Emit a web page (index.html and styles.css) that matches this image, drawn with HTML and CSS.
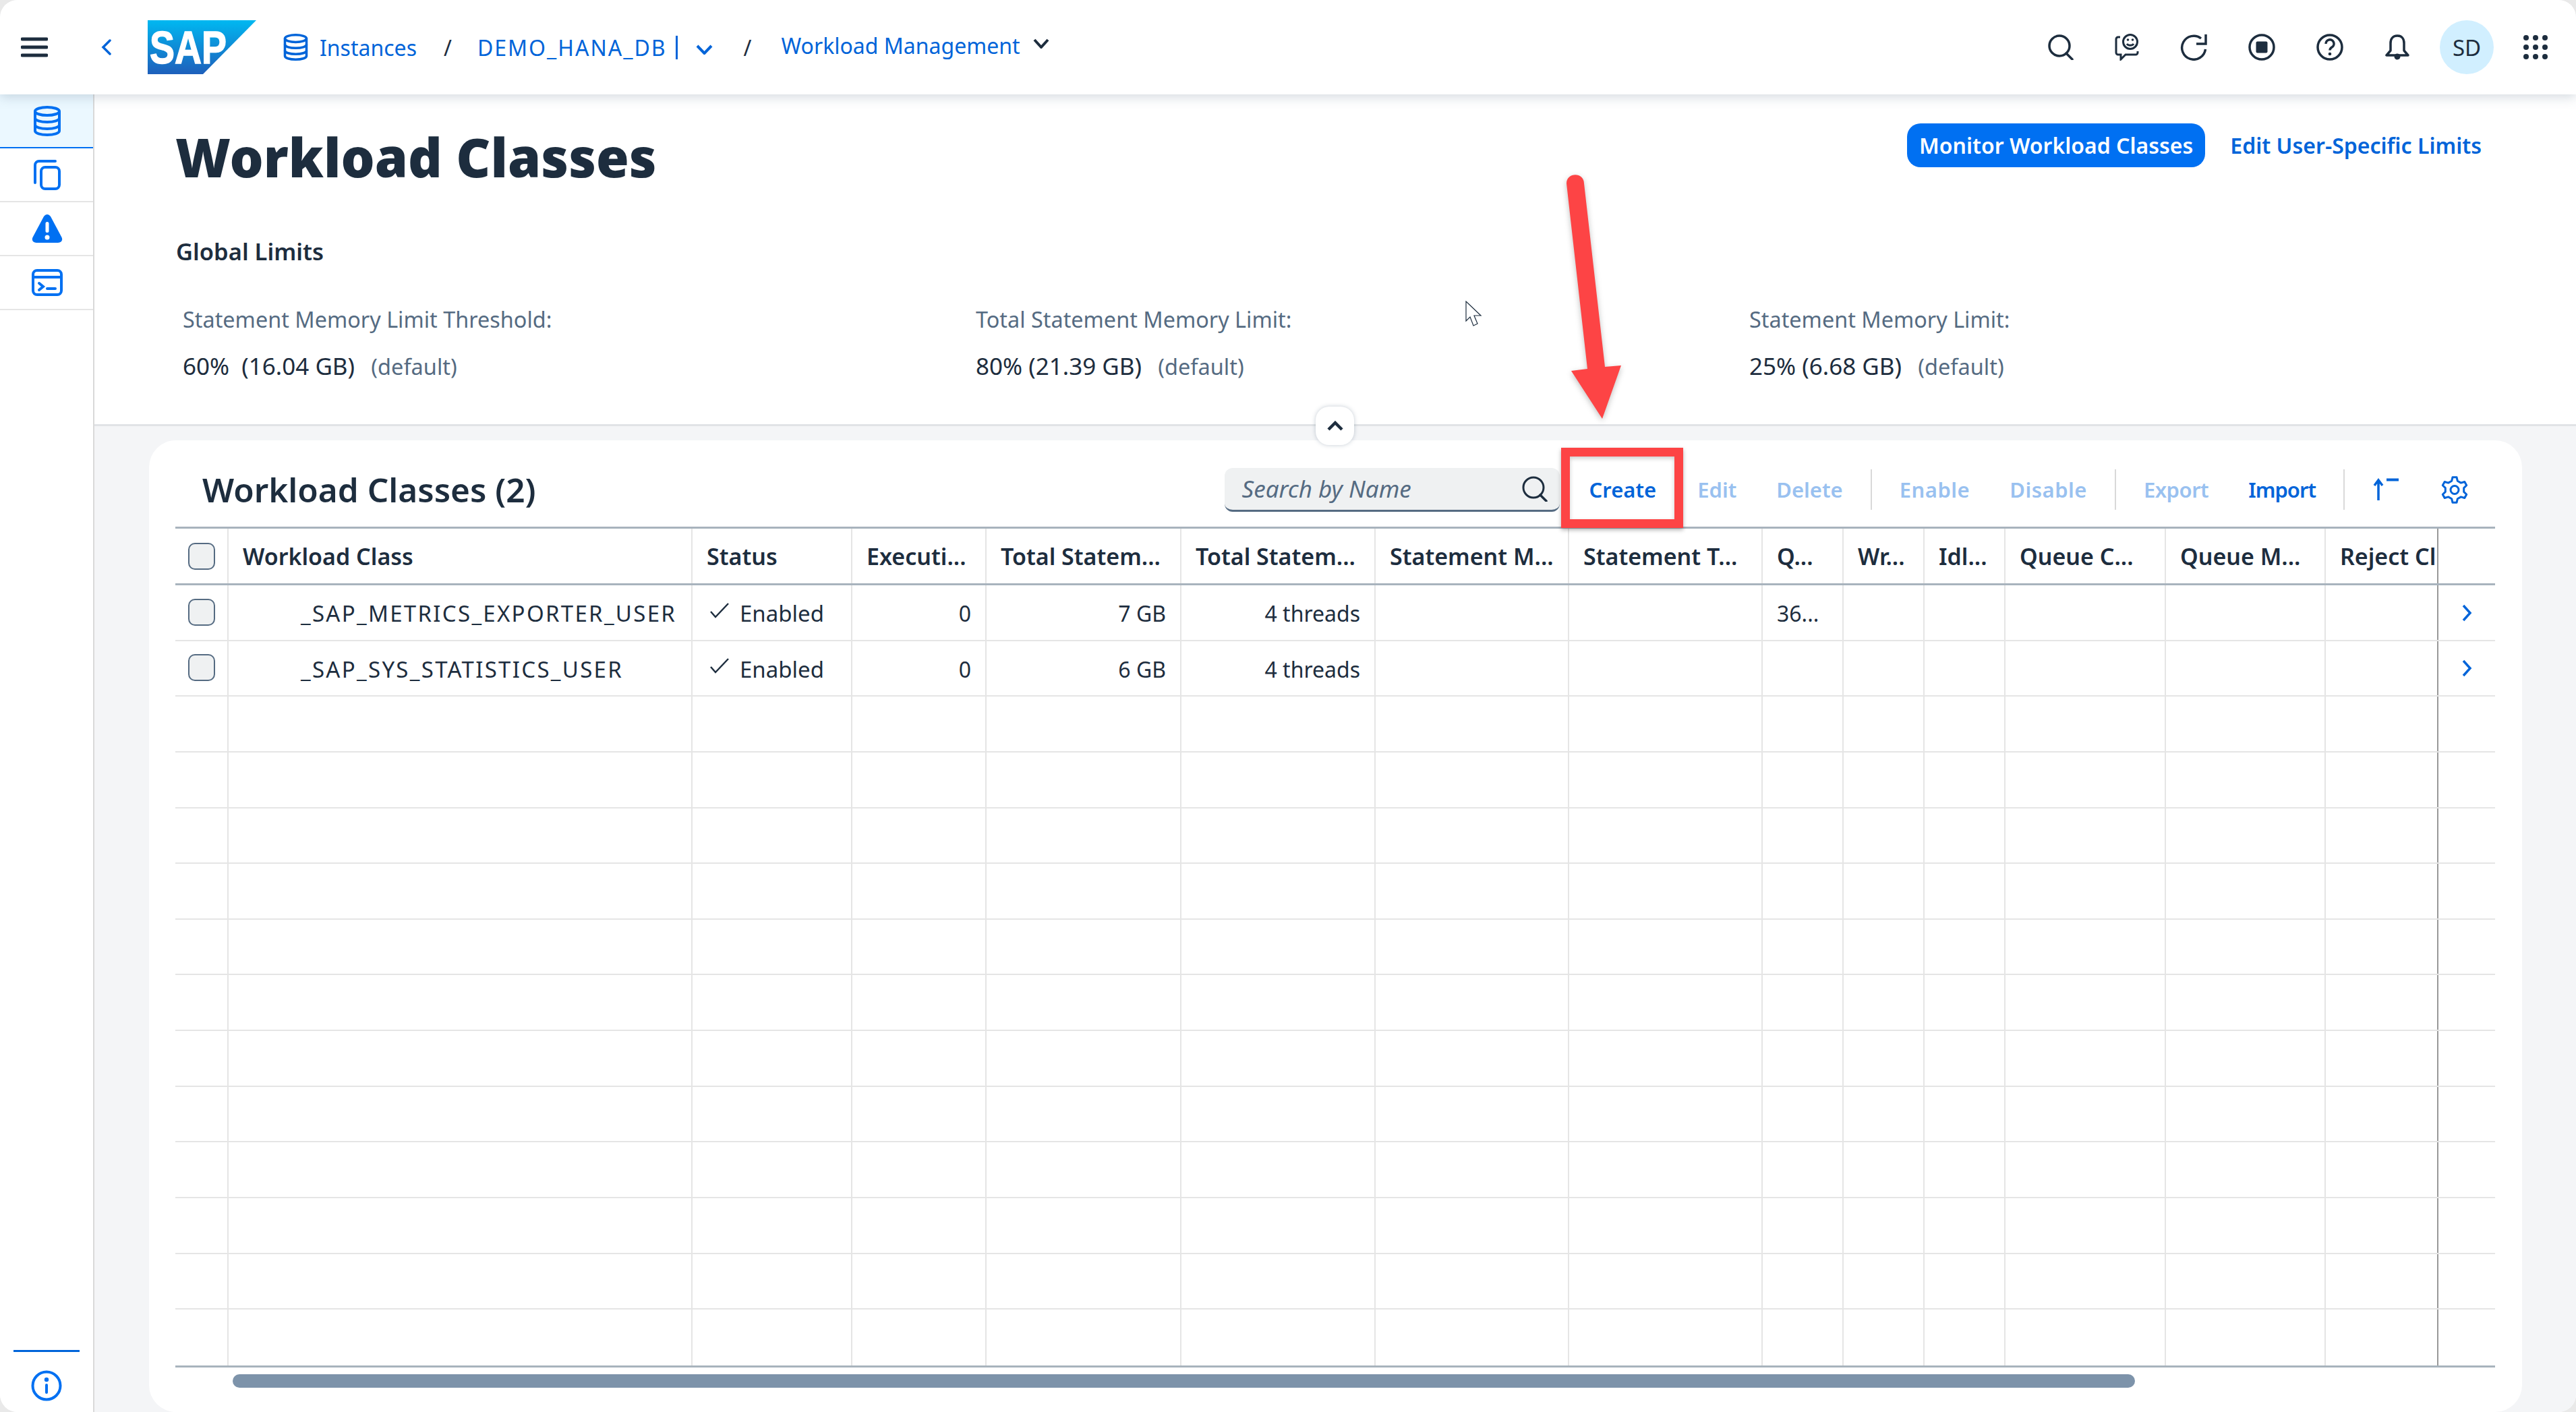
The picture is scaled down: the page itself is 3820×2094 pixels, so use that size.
FILE: index.html
```html
<!DOCTYPE html>
<html lang="en">
<head>
    <meta charset="UTF-8">
    <title>Workload Classes</title>
    <link rel="stylesheet" href="styles.css">
</head>
<body>
    <svg class="defs" width="0" height="0">
        <symbol id="db" viewBox="0 0 40 45">
            <g fill="none" stroke="currentColor" stroke-width="4">
                <ellipse cx="20" cy="8" rx="18" ry="6"/>
                <path d="M2 8v29c0 3.5 8 6 18 6s18-2.500 18-6V8"/>
                <path d="M2 18c0 3.500 8 6 18 6s18-2.500 18-6"/>
                <path d="M2 28c0 3.500 8 6 18 6s18-2.500 18-6"/>
            </g>
        </symbol>
    </svg>

    <div class="app">
        <header class="header">
            <svg class="menu-icon" width="40" height="30" viewBox="0 0 40 30"><path d="M2 3h36M2 15h36M2 27h36" stroke="#1d2d3e" stroke-width="5" stroke-linecap="round"/></svg>
            <svg class="back-icon" width="18" height="24" viewBox="0 0 18 24"><path d="M14 2L4 12l10 10" fill="none" stroke="#0064d9" stroke-width="3.500" stroke-linecap="round"/></svg>
            <svg class="logo" width="161" height="80" viewBox="0 0 161 80">
                <defs>
                    <linearGradient id="sapblue" x1="0" y1="0" x2="0" y2="1">
                        <stop offset="0" stop-color="#00b8f1"/>
                        <stop offset="1" stop-color="#1e5fbb"/>
                    </linearGradient>
                </defs>
                <path d="M0 0H161L82 80H0z" fill="url(#sapblue)"/>
                <text x="3" y="64" class="logo-text" textLength="114" lengthAdjust="spacingAndGlyphs">SAP</text>
            </svg>
            <nav class="crumbs">
                <svg class="crumb-db" width="37" height="40"><use href="#db"/></svg>
                <a class="crumb-link">Instances</a>
                <span class="crumb-sep">/</span>
                <a class="crumb-link crumb-db-name">DEMO_HANA_DB</a>
                <span class="crumb-bar"></span>
                <svg class="crumb-down" width="25" height="15" viewBox="0 0 25 15"><path d="M2 2l10.500 11L23 2" fill="none" stroke="#0064d9" stroke-width="4"/></svg>
                <span class="crumb-sep crumb-sep-2">/</span>
                <a class="crumb-link crumb-raised">Workload Management</a>
                <svg class="crumb-down-dark" width="24" height="15" viewBox="0 0 24 15"><path d="M2 2l10 11L22 2" fill="none" stroke="#1d2d3e" stroke-width="4"/></svg>
            </nav>
            <div class="shell-actions">
                <svg class="shell-icon" width="38" height="38" viewBox="0 0 38 38"><circle cx="17" cy="17" r="15" fill="none" stroke="#1d2d3e" stroke-width="3.500"/><path d="M27 28l9 9" stroke="#1d2d3e" stroke-width="3.500" stroke-linecap="round"/></svg>
                <svg class="shell-icon" width="36" height="40" viewBox="0 0 36 40"><g fill="none" stroke="#1d2d3e" stroke-width="3"><circle cx="23" cy="12" r="10.500"/><path d="M8 5H5a3 3 0 0 0-3 3v20a3 3 0 0 0 3 3h4v7l7-7h15a3 3 0 0 0 3-3v-2"/><path d="M18 15c2 3 8 3 10 0"/></g><circle cx="19.500" cy="9" r="1.800" fill="#1d2d3e"/><circle cx="26.500" cy="9" r="1.800" fill="#1d2d3e"/></svg>
                <svg class="shell-icon" width="40" height="40" viewBox="0 0 40 40"><g fill="none" stroke="#1d2d3e" stroke-width="3.500"><path d="M31 7A17.500 17.500 0 1 0 37.500 23"/><path d="M38 1V15H24"/></g></svg>
                <svg class="shell-icon" width="40" height="40" viewBox="0 0 40 40"><circle cx="20" cy="20" r="18" fill="none" stroke="#1d2d3e" stroke-width="3.500"/><rect x="11.500" y="11.500" width="17" height="17" rx="2" fill="#1d2d3e"/></svg>
                <svg class="shell-icon" width="40" height="40" viewBox="0 0 40 40"><circle cx="20" cy="20" r="18" fill="none" stroke="#1d2d3e" stroke-width="3.500"/><path d="M14 15a6 6 0 1 1 9 5c-2 1.300-3 2.500-3 4.500" fill="none" stroke="#1d2d3e" stroke-width="3.500"/><circle cx="20" cy="30" r="2.300" fill="#1d2d3e"/></svg>
                <svg class="shell-icon" width="38" height="38" viewBox="0 0 38 38"><path d="M19 2c-7 0-10 5-10 11v11l-6 7h32l-6-7V13c0-6-3-11-10-11z" fill="none" stroke="#1d2d3e" stroke-width="3.500" stroke-linejoin="round"/><circle cx="19" cy="33" r="4.500" fill="#1d2d3e"/></svg>
                <div class="avatar">SD</div>
                <svg class="shell-icon grid-icon" width="36" height="36" viewBox="0 0 36 36" fill="#1d2d3e"><circle cx="4" cy="4" r="4"/><circle cx="18" cy="4" r="4"/><circle cx="32" cy="4" r="4"/><circle cx="4" cy="18" r="4"/><circle cx="18" cy="18" r="4"/><circle cx="32" cy="18" r="4"/><circle cx="4" cy="32" r="4"/><circle cx="18" cy="32" r="4"/><circle cx="32" cy="32" r="4"/></svg>
            </div>
        </header>

        <div class="main">
            <aside class="sidebar">
                <div class="side-item side-active"><svg width="40" height="45"><use href="#db"/></svg></div>
                <div class="side-item">
                    <svg width="40" height="45" viewBox="0 0 40 45" fill="none" stroke="currentColor" stroke-width="4"><rect x="11" y="11" width="27" height="32" rx="6"/><path d="M2 34V8a6 6 0 0 1 6-6h24" stroke-linecap="round"/></svg>
                </div>
                <div class="side-item">
                    <svg width="46" height="42" viewBox="0 0 46 42"><path d="M18 3L2 33c-3 5 0 9 5 9h32c5 0 8-4 5-9L28 3c-3-4-7-4-10 0z" fill="currentColor"/><rect x="20.500" y="11" width="5" height="16" rx="2.500" fill="#fff"/><circle cx="23" cy="34" r="3.500" fill="#fff"/></svg>
                </div>
                <div class="side-item">
                    <svg width="46" height="40" viewBox="0 0 46 40" fill="none" stroke="currentColor" stroke-width="4"><rect x="2" y="2" width="42" height="36" rx="6"/><path d="M2 12h42"/><path d="M11 21l6 5-6 5" stroke-linecap="round"/><path d="M23 29h12" stroke-linecap="round"/></svg>
                </div>
                <div class="side-foot">
                    <div class="side-rule"></div>
                    <svg class="info-icon" width="46" height="46" viewBox="0 0 46 46"><circle cx="23" cy="23" r="20.500" fill="none" stroke="currentColor" stroke-width="4"/><circle cx="23" cy="14" r="3.200" fill="currentColor"/><path d="M23 22v11" stroke="currentColor" stroke-width="4" stroke-linecap="round"/></svg>
                </div>
            </aside>

            <main class="content">
                <section class="limits">
                    <div class="limits-top">
                        <h1 class="page-title">Workload Classes</h1>
                        <div class="limits-actions">
                            <button class="btn-primary">Monitor Workload Classes</button>
                            <a class="top-link">Edit User-Specific Limits</a>
                        </div>
                    </div>
                    <h2 class="limits-title">Global Limits</h2>
                    <div class="limits-grid">
                        <div class="limit limit-1">
                            <p class="limit-label">Statement Memory Limit Threshold:</p>
                            <p class="limit-value">60%&nbsp; (16.04 GB)&nbsp; <span class="muted">(default)</span></p>
                        </div>
                        <div class="limit limit-2">
                            <p class="limit-label">Total Statement Memory Limit:</p>
                            <p class="limit-value">80% (21.39 GB)&nbsp; <span class="muted">(default)</span></p>
                        </div>
                        <div class="limit">
                            <p class="limit-label">Statement Memory Limit:</p>
                            <p class="limit-value">25% (6.68 GB)&nbsp; <span class="muted">(default)</span></p>
                        </div>
                    </div>
                    <button class="collapse-btn">
                        <svg width="24" height="16" viewBox="0 0 24 16"><path d="M2 13L12 3l10 10" fill="none" stroke="#1d2d3e" stroke-width="4.500"/></svg>
                    </button>
                </section>

                <div class="card-wrap">
                    <section class="card">
                        <div class="card-head">
                            <h2 class="card-title">Workload Classes (2)</h2>
                            <div class="toolbar">
                                <div class="search">
                                    <span class="search-text">Search by Name</span>
                                    <svg width="38" height="38" viewBox="0 0 38 38"><circle cx="17" cy="17" r="15" fill="none" stroke="#1d2d3e" stroke-width="3"/><path d="M27 28l9 9" stroke="#1d2d3e" stroke-width="3.500" stroke-linecap="round"/></svg>
                                </div>
                                <a class="tool tool-create">Create</a>
                                <a class="tool tool-off">Edit</a>
                                <a class="tool tool-off tool-end">Delete</a>
                                <span class="tool-sep"></span>
                                <a class="tool tool-off tool-wide">Enable</a>
                                <a class="tool tool-off tool-wide tool-end">Disable</a>
                                <span class="tool-sep"></span>
                                <a class="tool tool-off tool-tight">Export</a>
                                <a class="tool tool-import tool-end">Import</a>
                                <span class="tool-sep"></span>
                                <svg class="tool-sort" width="40" height="34" viewBox="0 0 40 34"><path d="M9 33V3M3 11l6-8 6 8" fill="none" stroke="#0064d9" stroke-width="3.500"/><path d="M21 2.500h18" stroke="#0064d9" stroke-width="4"/></svg>
                                <svg class="tool-gear" width="40" height="41" viewBox="0 0 40 41"><path d="M17 1.700H23L24.300 7.200L29.400 10.100L34.800 8.500L37.700 13.700L33.700 17.600V23.400L37.700 27.300L34.800 32.500L29.400 30.900L24.300 33.800L23 39.300H17L15.700 33.800L10.600 30.900L5.200 32.500L2.300 27.300L6.300 23.400V17.600L2.300 13.700L5.200 8.500L10.600 10.100L15.700 7.200z" fill="none" stroke="#0064d9" stroke-width="3" stroke-linejoin="round"/><circle cx="20" cy="20.500" r="6" fill="none" stroke="#0064d9" stroke-width="3"/></svg>
                            </div>
                        </div>

                        <div class="table">
                            <div class="row row-head">
                                <div class="cell"><span class="check"></span></div>
                                <div class="cell">Workload Class</div>
                                <div class="cell">Status</div>
                                <div class="cell">Executi...</div>
                                <div class="cell">Total Statem...</div>
                                <div class="cell">Total Statem...</div>
                                <div class="cell">Statement M...</div>
                                <div class="cell">Statement T...</div>
                                <div class="cell">Q...</div>
                                <div class="cell">Wr...</div>
                                <div class="cell">Idl...</div>
                                <div class="cell">Queue C...</div>
                                <div class="cell">Queue M...</div>
                                <div class="cell cell-fixed">Reject Cl</div>
                                <div class="cell"></div>
                            </div>
                            <div class="row">
                                <div class="cell"><span class="check check-row"></span></div>
                                <div class="cell cell-name">_SAP_METRICS_EXPORTER_USER</div>
                                <div class="cell cell-status"><svg width="30" height="24" viewBox="0 0 30 24"><path d="M2 14l7 8L28 2" fill="none" stroke="#1d2d3e" stroke-width="2.500"/></svg>Enabled</div>
                                <div class="cell cell-num">0</div>
                                <div class="cell cell-num">7 GB</div>
                                <div class="cell cell-num">4 threads</div>
                                <div class="cell"></div>
                                <div class="cell"></div>
                                <div class="cell cell-low">36...</div>
                                <div class="cell"></div>
                                <div class="cell"></div>
                                <div class="cell"></div>
                                <div class="cell"></div>
                                <div class="cell cell-fixed"></div>
                                <div class="cell cell-go"><svg width="16" height="26" viewBox="0 0 16 26"><path d="M3 2l10 11L3 24" fill="none" stroke="#0064d9" stroke-width="3.500"/></svg></div>
                            </div>
                            <div class="row">
                                <div class="cell"><span class="check check-row"></span></div>
                                <div class="cell cell-name">_SAP_SYS_STATISTICS_USER</div>
                                <div class="cell cell-status"><svg width="30" height="24" viewBox="0 0 30 24"><path d="M2 14l7 8L28 2" fill="none" stroke="#1d2d3e" stroke-width="2.500"/></svg>Enabled</div>
                                <div class="cell cell-num">0</div>
                                <div class="cell cell-num">6 GB</div>
                                <div class="cell cell-num">4 threads</div>
                                <div class="cell"></div>
                                <div class="cell"></div>
                                <div class="cell"></div>
                                <div class="cell"></div>
                                <div class="cell"></div>
                                <div class="cell"></div>
                                <div class="cell"></div>
                                <div class="cell cell-fixed"></div>
                                <div class="cell cell-go"><svg width="16" height="26" viewBox="0 0 16 26"><path d="M3 2l10 11L3 24" fill="none" stroke="#0064d9" stroke-width="3.500"/></svg></div>
                            </div>
                            <!-- 3 -->
                            <div class="row"><div class="cell"></div><div class="cell"></div><div class="cell"></div><div class="cell"></div><div class="cell"></div><div class="cell"></div><div class="cell"></div><div class="cell"></div><div class="cell"></div><div class="cell"></div><div class="cell"></div><div class="cell"></div><div class="cell"></div><div class="cell cell-fixed"></div><div class="cell"></div></div>
                            <!-- 4 -->
                            <div class="row"><div class="cell"></div><div class="cell"></div><div class="cell"></div><div class="cell"></div><div class="cell"></div><div class="cell"></div><div class="cell"></div><div class="cell"></div><div class="cell"></div><div class="cell"></div><div class="cell"></div><div class="cell"></div><div class="cell"></div><div class="cell cell-fixed"></div><div class="cell"></div></div>
                            <!-- 5 -->
                            <div class="row"><div class="cell"></div><div class="cell"></div><div class="cell"></div><div class="cell"></div><div class="cell"></div><div class="cell"></div><div class="cell"></div><div class="cell"></div><div class="cell"></div><div class="cell"></div><div class="cell"></div><div class="cell"></div><div class="cell"></div><div class="cell cell-fixed"></div><div class="cell"></div></div>
                            <!-- 6 -->
                            <div class="row"><div class="cell"></div><div class="cell"></div><div class="cell"></div><div class="cell"></div><div class="cell"></div><div class="cell"></div><div class="cell"></div><div class="cell"></div><div class="cell"></div><div class="cell"></div><div class="cell"></div><div class="cell"></div><div class="cell"></div><div class="cell cell-fixed"></div><div class="cell"></div></div>
                            <!-- 7 -->
                            <div class="row"><div class="cell"></div><div class="cell"></div><div class="cell"></div><div class="cell"></div><div class="cell"></div><div class="cell"></div><div class="cell"></div><div class="cell"></div><div class="cell"></div><div class="cell"></div><div class="cell"></div><div class="cell"></div><div class="cell"></div><div class="cell cell-fixed"></div><div class="cell"></div></div>
                            <!-- 8 -->
                            <div class="row"><div class="cell"></div><div class="cell"></div><div class="cell"></div><div class="cell"></div><div class="cell"></div><div class="cell"></div><div class="cell"></div><div class="cell"></div><div class="cell"></div><div class="cell"></div><div class="cell"></div><div class="cell"></div><div class="cell"></div><div class="cell cell-fixed"></div><div class="cell"></div></div>
                            <!-- 9 -->
                            <div class="row"><div class="cell"></div><div class="cell"></div><div class="cell"></div><div class="cell"></div><div class="cell"></div><div class="cell"></div><div class="cell"></div><div class="cell"></div><div class="cell"></div><div class="cell"></div><div class="cell"></div><div class="cell"></div><div class="cell"></div><div class="cell cell-fixed"></div><div class="cell"></div></div>
                            <!-- 10 -->
                            <div class="row"><div class="cell"></div><div class="cell"></div><div class="cell"></div><div class="cell"></div><div class="cell"></div><div class="cell"></div><div class="cell"></div><div class="cell"></div><div class="cell"></div><div class="cell"></div><div class="cell"></div><div class="cell"></div><div class="cell"></div><div class="cell cell-fixed"></div><div class="cell"></div></div>
                            <!-- 11 -->
                            <div class="row"><div class="cell"></div><div class="cell"></div><div class="cell"></div><div class="cell"></div><div class="cell"></div><div class="cell"></div><div class="cell"></div><div class="cell"></div><div class="cell"></div><div class="cell"></div><div class="cell"></div><div class="cell"></div><div class="cell"></div><div class="cell cell-fixed"></div><div class="cell"></div></div>
                            <!-- 12 -->
                            <div class="row"><div class="cell"></div><div class="cell"></div><div class="cell"></div><div class="cell"></div><div class="cell"></div><div class="cell"></div><div class="cell"></div><div class="cell"></div><div class="cell"></div><div class="cell"></div><div class="cell"></div><div class="cell"></div><div class="cell"></div><div class="cell cell-fixed"></div><div class="cell"></div></div>
                            <!-- 13 -->
                            <div class="row"><div class="cell"></div><div class="cell"></div><div class="cell"></div><div class="cell"></div><div class="cell"></div><div class="cell"></div><div class="cell"></div><div class="cell"></div><div class="cell"></div><div class="cell"></div><div class="cell"></div><div class="cell"></div><div class="cell"></div><div class="cell cell-fixed"></div><div class="cell"></div></div>
                            <!-- 14 -->
                            <div class="row"><div class="cell"></div><div class="cell"></div><div class="cell"></div><div class="cell"></div><div class="cell"></div><div class="cell"></div><div class="cell"></div><div class="cell"></div><div class="cell"></div><div class="cell"></div><div class="cell"></div><div class="cell"></div><div class="cell"></div><div class="cell cell-fixed"></div><div class="cell"></div></div>
                        </div>
                        <div class="scrollbar"></div>
                    </section>
                </div>
            </main>
        </div>

        <!-- annotations drawn over the screenshot -->
        <svg class="mouse" width="26" height="40" viewBox="0 0 26 40"><path d="M1 1v29l6-6 5 13 6-3-5-12h10z" fill="#fff" stroke="#1d2d3e" stroke-width="1.200"/></svg>
        <svg class="arrow" width="100" height="380" viewBox="0 0 100 380"><path d="M13 22c0-17 26-17 26 0L70 294l24-2-28 79-46-71 24-3z" fill="#fd4445"/></svg>
        <div class="red-box"></div>
    </div>
</body>
</html>
```

FILE: styles.css
```css
* {
    box-sizing: border-box;
}
body {
    margin: 0;
    background-color: #e9e9e9;
    font-family: "Noto Sans", Arial, sans-serif;
    font-size: 32px;
    color: #1d2d3e;
    overflow: hidden;
}
h1, h2, p {
    margin: 0;
}
.defs {
    position: absolute;
}
.app {
    position: relative;
    width: 3820px;
    height: 2094px;
    display: flex;
    flex-direction: column;
    border-radius: 26px;
    overflow: hidden;
    background: #fff;
}

/* shell bar */
.header {
    position: relative;
    z-index: 2;
    flex: 0 0 140px;
    display: flex;
    align-items: center;
    padding-left: 31px;
    background: #fff;
    box-shadow: 0 4px 16px rgba(85, 107, 130, 0.25);
}
.back-icon {
    margin-left: 78px;
}
.logo {
    margin-left: 52px;
}
.logo-text {
    font-family: "Liberation Sans", Arial, sans-serif;
    font-size: 68px;
    font-weight: 700;
    fill: #fff;
    stroke: #fff;
    stroke-width: 1.500px;
}
.crumbs {
    display: flex;
    align-items: center;
    margin-left: 40px;
    color: #0064d9;
}
.crumb-link {
    white-space: nowrap;
}
.crumb-db-name {
    letter-spacing: 2px;
}
.crumb-db {
    color: #0064d9;
    margin-right: 17px;
}
.crumb-sep {
    margin: 0 38px 0 40px;
    color: #1d2d3e;
}
.crumb-sep-2 {
    margin: 0 44px 0 46px;
}
.crumb-bar {
    width: 3px;
    height: 35px;
    margin-left: 13px;
    background: #0064d9;
}
.crumb-down {
    margin-left: 27px;
    margin-top: 6px;
}
.crumb-raised {
    margin-top: -6px;
}
.crumb-down-dark {
    margin-left: 19px;
    margin-top: -12px;
}
.shell-actions {
    margin-left: auto;
    display: flex;
    align-items: center;
    padding-right: 42px;
}
.shell-icon {
    margin-right: 61px;
}
.avatar {
    width: 80px;
    height: 80px;
    margin-right: 44px;
    margin-left: -17px;
    border-radius: 50%;
    background: #d1efff;
    display: flex;
    align-items: center;
    justify-content: center;
    font-size: 33px;
}
.grid-icon {
    margin-right: 0;
}

/* left rail */
.main {
    flex: 1;
    display: flex;
    min-height: 0;
}
.sidebar {
    flex: 0 0 140px;
    display: flex;
    flex-direction: column;
    border-right: 2px solid #d9d9d9;
    background: #fff;
    color: #0070f2;
}
.side-item {
    height: 80px;
    display: flex;
    align-items: center;
    justify-content: center;
    padding-left: 2px;
    border-bottom: 2px solid #e5e5e5;
}
.side-active {
    background: #ebf8ff;
    border-bottom-color: #0070f2;
}
.side-foot {
    margin-top: auto;
    padding: 0 20px 16px;
    text-align: center;
}
.side-rule {
    height: 3px;
    background: #0064d9;
    margin-bottom: 27px;
}
.info-icon {
    display: block;
    margin: 0 auto;
}

/* global limits */
.content {
    flex: 1;
    display: flex;
    flex-direction: column;
    min-width: 0;
    background: #f4f5f7;
}
.limits {
    position: relative;
    flex: 0 0 492px;
    background: #fff;
    border-bottom: 3px solid #e1e3e6;
    padding: 0 0 0 121px;
}
.limits-top {
    display: flex;
    justify-content: space-between;
    align-items: flex-start;
    height: 211px;
    padding: 43px 140px 0 0;
}
.page-title {
    font-size: 79px;
    font-weight: 900;
    line-height: 100px;
    margin-left: -1px;
}
.limits-actions {
    display: flex;
    align-items: center;
    gap: 37px;
}
.btn-primary {
    height: 65px;
    padding: 0 18px;
    border: none;
    border-radius: 20px;
    background: #0070f2;
    color: #fff;
    font: 600 32px "Noto Sans", Arial, sans-serif;
}
.top-link {
    color: #0064d9;
    font-weight: 600;
}
.limits-title {
    font-size: 34.500px;
    font-weight: 600;
    line-height: 44px;
}
.limits-grid {
    display: flex;
    padding: 56px 0 0 10px;
}
.limit-1 {
    width: 1176px;
}
.limit-2 {
    width: 1147px;
}
.limit-label {
    color: #556b82;
    line-height: 44px;
    font-size: 32.400px;
}
.limit-value {
    margin-top: 26px;
    line-height: 44px;
    font-size: 35px;
}
.muted {
    margin-left: 6px;
    color: #556b82;
    font-size: 32.500px;
}
.collapse-btn {
    position: absolute;
    left: 1811px;
    top: 463px;
    width: 57px;
    height: 57px;
    padding: 0;
    border: none;
    border-radius: 20px;
    background: #fff;
    box-shadow: 0 0 6px rgba(85, 107, 130, 0.35);
    display: flex;
    align-items: center;
    justify-content: center;
    z-index: 1;
}

/* table card */
.card-wrap {
    flex: 1;
    padding: 21px 80px 0 81px;
    min-height: 0;
}
.card {
    height: 100%;
    padding: 0 40px 0 39px;
    background: #fff;
    border-radius: 40px;
}
.card-head {
    height: 128px;
    display: flex;
    align-items: center;
    justify-content: space-between;
    padding: 18px 40px 0 40px;
}
.card-title {
    font-size: 49.500px;
    font-weight: 600;
}
.toolbar {
    display: flex;
    align-items: center;
}
.search {
    width: 497px;
    height: 65px;
    padding: 0 18px 0 26px;
    margin-right: 44px;
    display: flex;
    align-items: center;
    justify-content: space-between;
    background: #eff1f2;
    border-bottom: 3px solid #556b82;
    border-radius: 12px;
}
.search-text {
    color: #556b82;
    font-style: italic;
    font-size: 35px;
}
.tool {
    color: #0064d9;
    font-size: 31px;
    font-weight: 600;
    margin-right: 59px;
}
.tool-create {
    margin-right: 61px;
}
.tool-end {
    margin-right: 60px;
}
.tool-tight {
    letter-spacing: -0.500px;
}
.tool-wide {
    letter-spacing: 0.500px;
}
.tool-import {
    letter-spacing: -1px;
}
.tool-off {
    color: #99c1f0;
}
.tool-sep {
    width: 2px;
    height: 60px;
    margin: 0 41px 0 -19px;
    background: #d9d9d9;
}
.tool-sort {
    margin-right: 62px;
}

.table {
    border-top: 3px solid #a8b3bd;
    border-bottom: 3px solid #a8b3bd;
}
.row {
    display: grid;
    grid-template-columns: 79px 688px 237px 199px 289px 288px 287px 287px 120px 120px 120px 238px 237px 167px 84px;
    height: 82.640px;
    border-bottom: 2px solid #e5e5e5;
}
.row:last-child {
    border-bottom: none;
}
.row-head {
    height: 84px;
    border-bottom: 3px solid #a8b3bd;
    font-size: 34px;
    font-weight: 600;
}
.cell {
    min-width: 0;
    display: flex;
    align-items: center;
    padding: 0 10px 0 21px;
    border-right: 2px solid #e5e5e5;
    white-space: nowrap;
    overflow: hidden;
}
.row:not(.row-head) .cell {
    padding-top: 3px;
}
.cell:last-child {
    border-right: none;
}
.cell-fixed {
    border-right-color: #999;
    padding-right: 0;
}
.row .cell-name {
    padding: 0 0 0 107px;
    font-size: 33px;
    letter-spacing: 2.300px;
}
.cell-status {
    font-size: 33px;
    padding-left: 25px;
}
.cell-status svg {
    margin-right: 15px;
    margin-top: -10px;
}
.cell-num {
    justify-content: flex-end;
    padding-right: 21px;
}
.cell-go {
    padding-left: 34px;
}
.row .cell-go {
    padding-top: 0;
}
.cell-go svg {
    margin-top: -2px;
}
.check {
    width: 40px;
    height: 40px;
    flex: none;
    margin-left: -2px;
    border: 2px solid #556b82;
    border-radius: 10px;
    background: #eff1f2;
}
.check-row {
    margin-top: -4px;
}
.scrollbar {
    width: 2821px;
    height: 20px;
    margin: 10px 0 0 85px;
    border-radius: 10px;
    background: #7d93aa;
}

/* annotations */
.mouse {
    position: absolute;
    left: 2173px;
    top: 446px;
}
.arrow {
    position: absolute;
    left: 2310px;
    top: 250px;
    filter: drop-shadow(0 3px 4px rgba(0, 0, 0, 0.25));
}
.red-box {
    position: absolute;
    left: 2315px;
    top: 664px;
    width: 181px;
    height: 119px;
    border: 13px solid #fd4445;
    box-shadow: 0 3px 6px rgba(0, 0, 0, 0.3), inset 0 3px 6px rgba(0, 0, 0, 0.2);
}
```
